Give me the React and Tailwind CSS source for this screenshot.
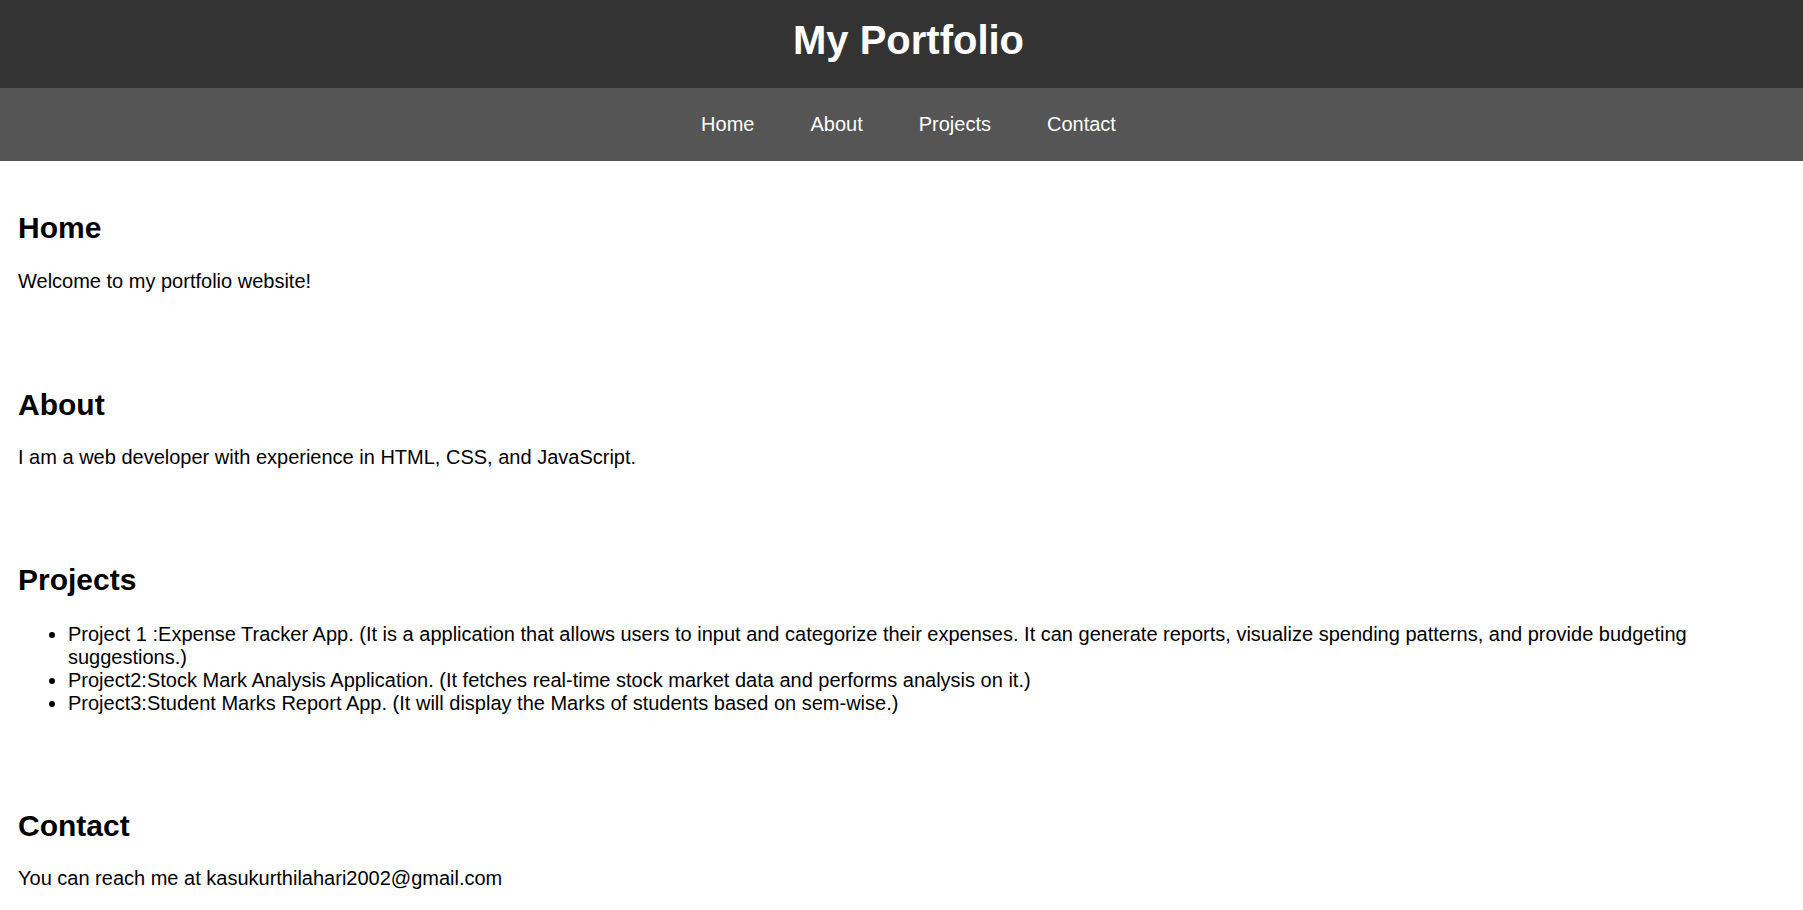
export default function App() {
  const font = { fontFamily: '"Liberation Sans", Arial, Helvetica, sans-serif' };
  return (
    <div style={font} className="min-h-screen bg-white text-black">
      <header className="h-[88px] bg-[#333333] pt-[16.5px] pl-[14px] text-center text-white">
        <h1 className="text-[40px] font-bold leading-[46px]">My Portfolio</h1>
      </header>
      <nav className="flex h-[73px] items-center justify-center gap-[56px] bg-[#555555] pl-[14px] text-[20px] leading-[23px] text-white">
        <a href="#home">Home</a>
        <a href="#about">About</a>
        <a href="#projects">Projects</a>
        <a href="#contact">Contact</a>
      </nav>
      <main className="px-[18px]">
        <section id="home" className="flex flex-col pt-[50px] pb-[45px]">
          <h2 className="text-[30px] font-bold leading-[34.5px]">Home</h2>
          <p className="mt-[24px] text-[20px] leading-[23px]">Welcome to my portfolio website!</p>
        </section>
        <section id="about" className="flex flex-col pt-[50px] pb-[44px]">
          <h2 className="text-[30px] font-bold leading-[34.5px]">About</h2>
          <p className="mt-[24px] text-[20px] leading-[23px]">
            I am a web developer with experience in HTML, CSS, and JavaScript.
          </p>
        </section>
        <section id="projects" className="flex flex-col pt-[50px] pb-[44px]">
          <h2 className="text-[30px] font-bold leading-[34.5px]">Projects</h2>
          <ul className="mt-[25px] list-disc pl-[50px] text-[20px] leading-[23px]">
            <li>
              Project 1 :Expense Tracker App. (It is a application that allows users to input and categorize their expenses. It can generate reports, visualize spending patterns, and provide budgeting suggestions.)
            </li>
            <li>Project2:Stock Mark Analysis Application. (It fetches real-time stock market data and performs analysis on it.)</li>
            <li>Project3:Student Marks Report App. (It will display the Marks of students based on sem-wise.)</li>
          </ul>
        </section>
        <section id="contact" className="flex flex-col pt-[50px] pb-[45px]">
          <h2 className="text-[30px] font-bold leading-[34.5px]">Contact</h2>
          <p className="mt-[24px] text-[20px] leading-[23px]">You can reach me at kasukurthilahari2002@gmail.com</p>
        </section>
      </main>
    </div>
  );
}
